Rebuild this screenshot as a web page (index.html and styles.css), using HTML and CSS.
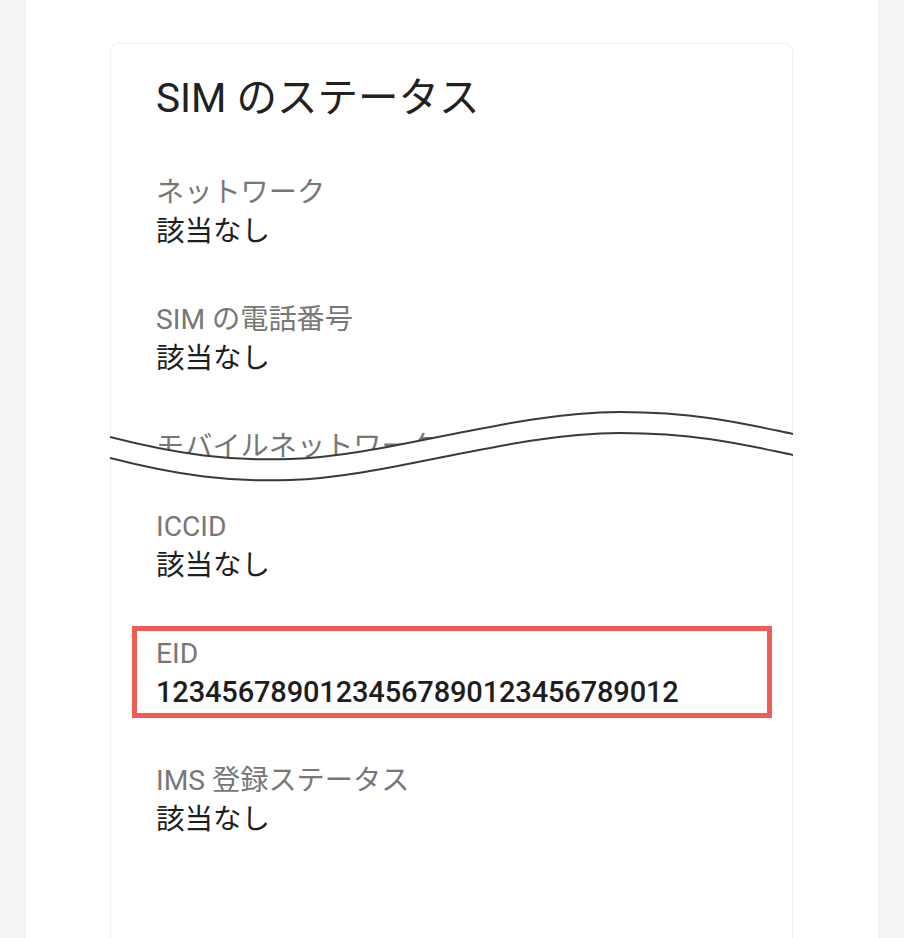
FILE: index.html
```html
<!DOCTYPE html>
<html lang="ja">
<head>
<meta charset="utf-8">
<title>SIM のステータス</title>
<link rel="stylesheet" href="styles.css">
</head>
<body>
<div class="page">
  <section class="card">
    <h1 class="title">SIM のステータス</h1>
    <div class="list">
      <div class="item">
        <div class="label">ネットワーク</div>
        <div class="value">該当なし</div>
      </div>
      <div class="item">
        <div class="label">SIM の電話番号</div>
        <div class="value">該当なし</div>
      </div>
      <div class="item torn">
        <div class="label">モバイルネットワーク</div>
      </div>
      <div class="item">
        <div class="label">ICCID</div>
        <div class="value">該当なし</div>
      </div>
      <div class="item highlight">
        <div class="label">EID</div>
        <div class="value eid">12345678901234567890123456789012</div>
      </div>
      <div class="item">
        <div class="label">IMS 登録ステータス</div>
        <div class="value">該当なし</div>
      </div>
    </div>
    <svg class="tear" width="683" height="90" viewBox="0 0 683 90" aria-hidden="true">
      <path class="tear-fill" d="M0,37 C70,55 120,61 180,59 C280,56 400,12 510,12 C590,12 640,25 683,34 L683,55 C640,46 590,33 510,33 C400,33 280,77 180,80 C120,82 70,76 0,58 Z"/>
      <path class="tear-line" d="M0,37 C70,55 120,61 180,59 C280,56 400,12 510,12 C590,12 640,25 683,34"/>
      <path class="tear-line" d="M0,58 C70,76 120,82 180,80 C280,77 400,33 510,33 C590,33 640,46 683,55"/>
    </svg>
  </section>
</div>
</body>
</html>
```

FILE: styles.css
```css
html, body {
  margin: 0;
  padding: 0;
}

body {
  background: #f4f4f4;
  font-family: Roboto, "Noto Sans CJK JP", sans-serif;
  color: #212121;
  overflow: hidden;
}

.page {
  margin: 0 26px;
  background: #ffffff;
  min-height: 938px;
  padding-top: 43px;
  box-sizing: border-box;
}

.card {
  position: relative;
  margin-left: 84px;
  width: 683px;
  min-height: 940px;
  box-sizing: border-box;
  border: 1px solid #f0f0f0;
  border-radius: 8px;
  box-shadow: 0 0 2px rgba(0, 0, 0, 0.04);
  padding: 30px 0 0 45px;
}

.title {
  margin: 0;
  font-size: 40.5px;
  line-height: 48px;
  font-weight: 400;
  color: #212121;
}

.list {
  display: flex;
  flex-direction: column;
  gap: 49px;
  margin-top: 51px;
}

.item {
  position: relative;
  display: flex;
  flex-direction: column;
}

.label {
  font-size: 28.2px;
  line-height: 39px;
  color: #777777;
}

.value {
  font-size: 28.5px;
  line-height: 39px;
  color: #1e1e1e;
}

.value.eid {
  font-size: 29px;
  font-weight: 500;
  letter-spacing: -0.15px;
}

.item.torn {
  height: 31px;
}

.item.highlight::before {
  content: "";
  position: absolute;
  top: -8px;
  bottom: -6px;
  left: -24px;
  width: 640px;
  box-sizing: border-box;
  border: 5px solid #ef5b55;
}

.tear {
  position: absolute;
  left: -1px;
  top: 356px;
}

.tear-fill {
  fill: #ffffff;
}

.tear-line {
  fill: none;
  stroke: #3a3a3a;
  stroke-width: 2;
}
```
